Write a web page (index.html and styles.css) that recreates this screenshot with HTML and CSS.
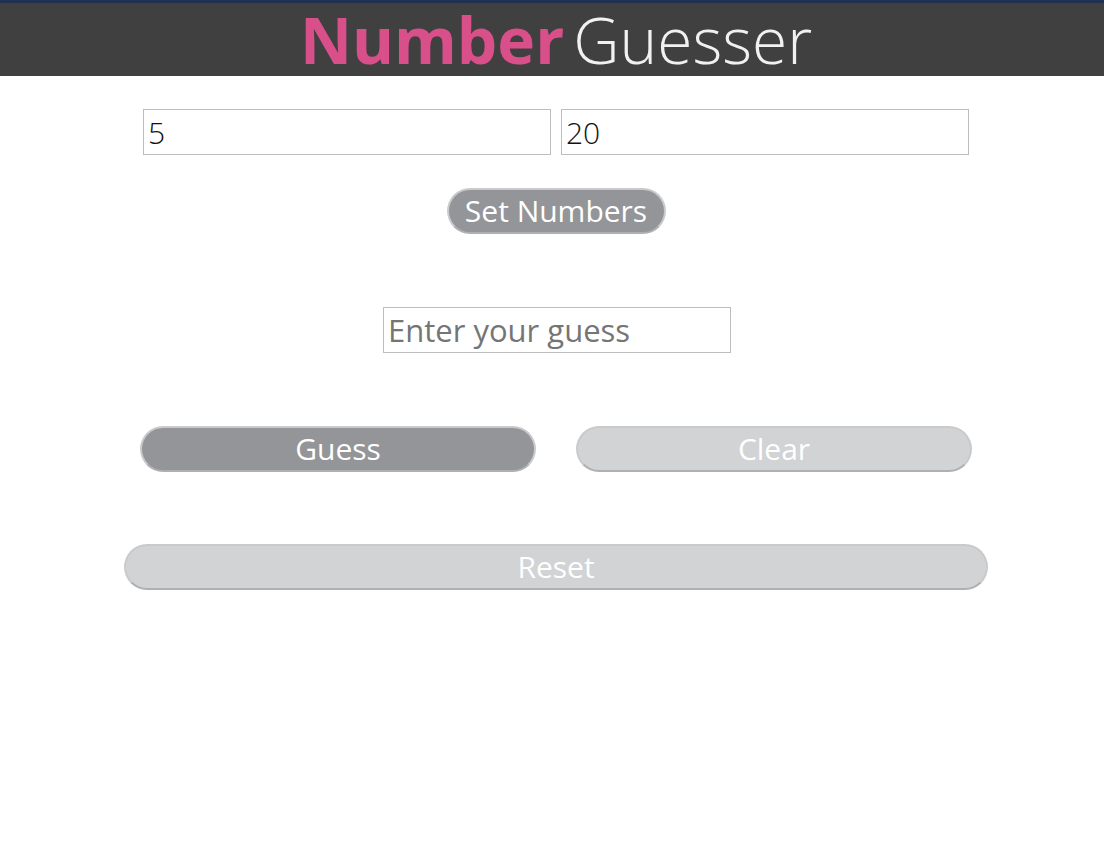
FILE: index.html
```html
<!DOCTYPE html>
<html>
<head>
<meta charset="utf-8">
<link rel="stylesheet" href="styles.css">
</head>
<body>
<header class="top">
  <h1 class="title"><span class="t-bold">Number</span><span class="t-light">Guesser</span></h1>
</header>
<main class="page">
  <div class="range-row">
    <input class="field range-field" type="text" value="5">
    <input class="field range-field" type="text" value="20">
  </div>
  <button class="btn btn-dark btn-set">Set Numbers</button>
  <input class="field guess-field" type="text" placeholder="Enter your guess">
  <div class="action-row">
    <button class="btn btn-dark btn-half">Guess</button>
    <button class="btn btn-light btn-half">Clear</button>
  </div>
  <button class="btn btn-light btn-reset">Reset</button>
</main>
</body>
</html>
```
FILE: styles.css
```css
html, body {
  margin: 0;
  padding: 0;
  background: #ffffff;
  font-family: "Open Sans", "Liberation Sans", sans-serif;
}

.top {
  background: #404040;
  border-top: 3px solid #1f3152;
  height: 73px;
  padding-left: 8px;
  display: flex;
  justify-content: center;
}

.title {
  margin: 0;
  font-size: 64px;
  line-height: 73px;
  font-weight: 300;
  display: flex;
  gap: 9px;
}

.t-bold {
  color: #d94f8a;
  font-weight: 700;
}

.t-light {
  color: #f1f1f2;
  font-weight: 300;
}

.page {
  padding-left: 8px;
  display: flex;
  flex-direction: column;
  align-items: center;
}

.field {
  box-sizing: border-box;
  height: 46px;
  border: 1px solid #bdbdbd;
  border-radius: 0;
  font-family: "Open Sans", sans-serif;
  font-size: 30px;
  font-weight: 300;
  color: #111;
  padding: 0 4px;
  outline: none;
}

.field::placeholder {
  color: #757575;
  font-weight: 400;
}

.range-row {
  margin-top: 33px;
  display: flex;
  gap: 10px;
}

.range-field {
  width: 408px;
}

.btn {
  box-sizing: border-box;
  height: 46px;
  border: 2px solid #c9cacc;
  border-bottom-color: #aeb0b2;
  border-radius: 23px;
  color: #ffffff;
  font-family: "Open Sans", sans-serif;
  font-size: 30px;
  font-weight: 400;
  padding: 0;
  line-height: 40px;
}

.btn-dark {
  background: #939598;
}

.btn-light {
  background: #d1d3d4;
}

.btn-set {
  margin-top: 33px;
  width: 219px;
}

.guess-field {
  margin-top: 73px;
  width: 348px;
  margin-left: 2px;
  font-size: 31px;
}

.action-row {
  margin-top: 73px;
  display: flex;
  gap: 40px;
}

.btn-half {
  width: 396px;
}

.btn-reset {
  margin-top: 72px;
  width: 864px;
}
```
